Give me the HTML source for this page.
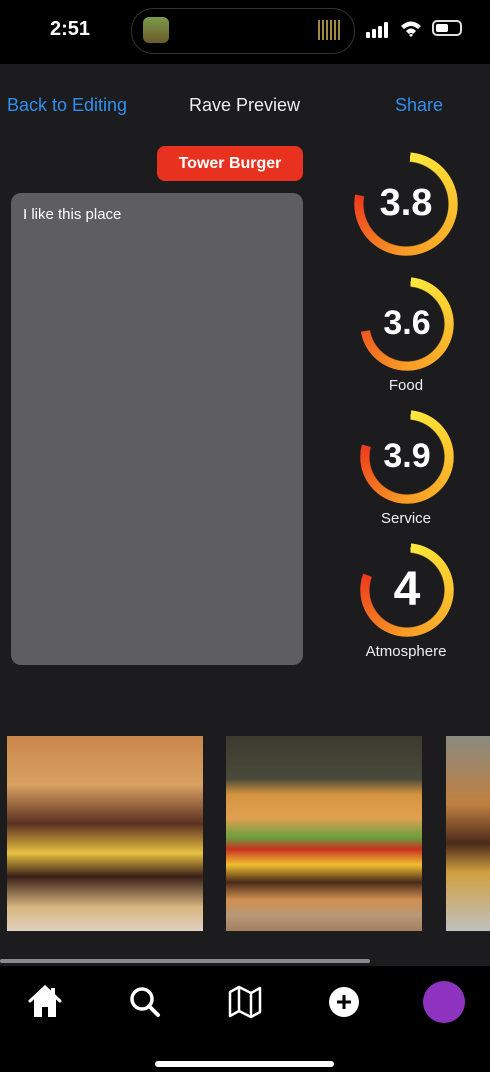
<!DOCTYPE html><html><head><style>
body{margin:0;width:490px;height:1072px;background:#1c1c1e;font-family:"Liberation Sans",sans-serif;position:relative;overflow:hidden;color:#fff}
.a{position:absolute}
.ring{position:absolute;border-radius:50%;mask:radial-gradient(circle closest-side,transparent calc(100% - 10px),#000 calc(100% - 9px) 99%,transparent 100%);-webkit-mask:radial-gradient(circle closest-side,transparent calc(100% - 10px),#000 calc(100% - 9px) 99%,transparent 100%)}
.num{position:absolute;font-weight:bold;text-align:center;width:100px}
.lbl{position:absolute;font-size:15px;text-align:center;width:120px;color:#eee}
</style></head><body>
<div class="a" style="left:0;top:0;width:490px;height:64px;background:#000"></div>
<div class="a" style="left:50px;top:18px;font-size:20px;font-weight:bold">2:51</div>
<div class="a" style="left:131px;top:8px;width:222px;height:44px;border-radius:22px;background:#000;border:1px solid #333"></div>
<div class="a" style="left:143px;top:17px;width:26px;height:26px;border-radius:6px;background:linear-gradient(#7a9a4a,#6b5a2a)"></div>
<div class="a" style="left:318px;top:20px;width:22px;height:20px;background:repeating-linear-gradient(90deg,#a08a40 0 2px,transparent 2px 4px)"></div>
<svg class="a" style="left:366px;top:22px" width="24" height="16" viewBox="0 0 24 16"><rect x="0" y="10" width="4" height="6" rx="1" fill="#fff"/><rect x="6" y="7" width="4" height="9" rx="1" fill="#fff"/><rect x="12" y="4" width="4" height="12" rx="1" fill="#fff"/><rect x="18" y="0" width="4" height="16" rx="1" fill="#fff"/></svg>
<svg class="a" style="left:400px;top:20px" width="22" height="18" viewBox="0 0 22 18"><path d="M1 6Q11 -3 21 6L18 9Q11 3 4 9Z M6 11Q11 6 16 11L13 14Q11 12 9 14Z M9 15L11 17L13 15Q11 13 9 15Z" fill="#fff"/></svg>
<div class="a" style="left:432px;top:20px;width:30px;height:16px;border:2px solid #ddd;border-radius:5px;box-sizing:border-box"><div style="margin:2px;width:12px;height:8px;background:#fff;border-radius:2px"></div></div>
<div class="a" style="left:7px;top:95px;font-size:18px;color:#2f8ff0">Back to Editing</div>
<div class="a" style="left:189px;top:95px;font-size:18px;color:#eee">Rave Preview</div>
<div class="a" style="left:395px;top:95px;font-size:18px;color:#2f8ff0">Share</div>
<div class="a" style="left:157px;top:146px;width:146px;height:35px;background:#e8321f;border-radius:8px;font-size:16px;font-weight:bold;text-align:center;line-height:35px">Tower Burger</div>
<div class="a" style="left:11px;top:193px;width:292px;height:472px;background:#5e5e61;border-radius:10px"></div>
<div class="a" style="left:23px;top:206px;font-size:15px">I like this place</div>

<div class="ring" style="left:354px;top:152px;width:104px;height:104px;background:conic-gradient(from 5deg,#ffe93a,#fbc02d 90deg,#f89a24 180deg,#ee3a1c 275deg,transparent 276deg)"></div>
<div class="num" style="left:356px;top:182px;font-size:38px">3.8</div>
<div class="ring" style="left:360px;top:277px;width:94px;height:94px;background:conic-gradient(from 5deg,#ffe93a,#fbc02d 90deg,#f89a24 180deg,#ef5a20 255deg,transparent 256deg)"></div>
<div class="num" style="left:357px;top:304px;font-size:34px">3.6</div>
<div class="lbl" style="left:346px;top:377px">Food</div>
<div class="ring" style="left:360px;top:410px;width:94px;height:94px;background:conic-gradient(from 5deg,#ffe93a,#fbc02d 90deg,#f89a24 180deg,#ee3a1c 280deg,transparent 281deg)"></div>
<div class="num" style="left:357px;top:437px;font-size:34px">3.9</div>
<div class="lbl" style="left:346px;top:510px">Service</div>
<div class="ring" style="left:360px;top:543px;width:94px;height:94px;background:conic-gradient(from 5deg,#ffe93a,#fbc02d 90deg,#f89a24 180deg,#ee3a1c 285deg,transparent 286deg)"></div>
<div class="num" style="left:357px;top:562px;font-size:48px">4</div>
<div class="lbl" style="left:346px;top:643px">Atmosphere</div>

<div class="a" style="left:7px;top:736px;width:196px;height:195px;background:linear-gradient(180deg,#c9874c 0,#d9a062 25%,#5a3020 45%,#e8c040 60%,#3a2018 72%,#d9b880 88%,#e0d0c0)"></div>
<div class="a" style="left:226px;top:736px;width:196px;height:195px;background:linear-gradient(180deg,#3a3a30 0,#4a4a3a 22%,#d69540 30%,#e0a050 42%,#6aa040 52%,#c83020 58%,#f0c030 66%,#4a2a1a 75%,#d09050 84%,#b89878 92%,#a08060)"></div>
<div class="a" style="left:446px;top:736px;width:44px;height:195px;background:linear-gradient(180deg,#8a8a80,#c08040 35%,#4a2a1a 55%,#d0a040 70%,#c0c0c0)"></div>
<div class="a" style="left:0;top:959px;width:370px;height:4px;background:#8a8a8e;border-radius:2px"></div>

<div class="a" style="left:0;top:966px;width:490px;height:106px;background:#000"></div>
<svg class="a" style="left:27px;top:984px" width="36" height="36" viewBox="0 0 36 36"><path d="M3 17L18 3L33 17" stroke="#fff" stroke-width="3" fill="none" stroke-linecap="round"/><path d="M7 15V33H15V23H21V33H29V15L18 5Z" fill="#fff"/><rect x="24" y="4" width="4" height="8" fill="#fff"/></svg>
<svg class="a" style="left:128px;top:985px" width="34" height="34" viewBox="0 0 34 34"><circle cx="14" cy="14" r="10" stroke="#fff" stroke-width="3.5" fill="none"/><path d="M21 21L30 30" stroke="#fff" stroke-width="4" stroke-linecap="round"/></svg>
<svg class="a" style="left:227px;top:984px" width="36" height="36" viewBox="0 0 36 36"><path d="M3 8L12 3L24 9L33 4V28L24 33L12 27L3 32Z M12 3V27 M24 9V33" stroke="#fff" stroke-width="2.5" fill="none" stroke-linejoin="round"/></svg>
<svg class="a" style="left:328px;top:986px" width="32" height="32" viewBox="0 0 32 32"><circle cx="16" cy="16" r="15" fill="#fff"/><path d="M16 9V23M9 16H23" stroke="#000" stroke-width="3"/></svg>
<div class="a" style="left:423px;top:981px;width:42px;height:42px;border-radius:50%;background:#8e33c0"></div>
<div class="a" style="left:155px;top:1061px;width:179px;height:6px;border-radius:3px;background:#fff"></div>
</body></html>
